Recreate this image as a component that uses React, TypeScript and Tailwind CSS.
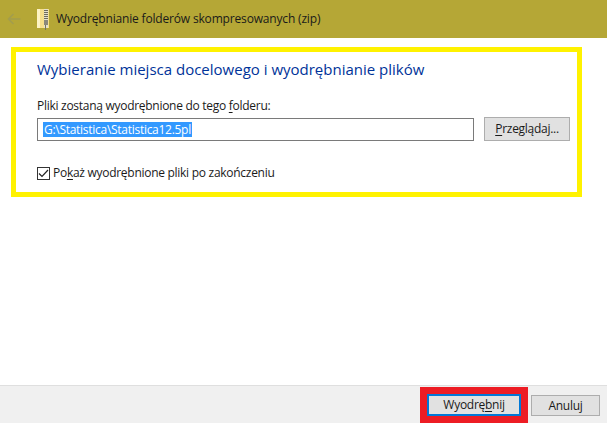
import React from 'react';

const ZipIcon = () => (
  <svg width="13" height="22" viewBox="0 0 13 22" className="shrink-0">
    <rect x="0" y="1" width="12" height="19" fill="#f7e08c" />
    <rect x="0" y="1" width="3" height="19" fill="#fdf3c4" />
    <rect x="7" y="1" width="4" height="19" fill="#e4e0cc" />
    <path d="M7 2.5h4M7 4.5h4M7 6.5h4M7 8.5h4M7 10.5h4" stroke="#6f6c5c" strokeWidth="1" />
    <rect x="7" y="12" width="4" height="5" fill="#8b887a" />
    <path d="M8.5 17v5" stroke="#77745f" strokeWidth="1" />
  </svg>
);

const BackArrow = () => (
  <svg width="14" height="12" viewBox="0 0 14 12" fill="none" stroke="#a39d4e" strokeWidth="1.5">
    <path d="M13.5 6H1.5M6.5 1l-5 5 5 5" />
  </svg>
);

const Mnemonic: React.FC<{ children: React.ReactNode }> = ({ children }) => (
  <span className="underline underline-offset-2">{children}</span>
);

const App: React.FC = () => {
  return (
    <div className="flex h-[423px] w-[607px] flex-col overflow-hidden bg-white font-['Open_Sans','Noto_Sans',sans-serif] text-[12px] leading-[16px] tracking-[-0.28px] text-[#1a1a1a]">
      {/* title bar */}
      <div className="flex h-[38px] shrink-0 items-center bg-[#b5a736] pl-[7px]">
        <BackArrow />
        <div className="ml-[16px] mr-[6px] flex">
          <ZipIcon />
        </div>
        <span className="tracking-[-0.17px]">Wyodrębnianie folderów skompresowanych (zip)</span>
      </div>

      {/* content with the yellow marker frame */}
      <div className="flex-1 px-[11px] pt-[9px]">
        <div className="h-[150px] w-[571px] border-[5px] border-[#fff200] pl-[21px] pr-[7px] pt-[5px]">
          <h1 className="text-[15px] leading-[24px] font-normal tracking-normal text-[#003399]">
            Wybieranie miejsca docelowego i wyodrębnianie plików
          </h1>
          <p className="mt-[17px]">
            Pliki zostaną wyodrębnione do tego <Mnemonic>f</Mnemonic>olderu:
          </p>
          <div className="mt-[3px] flex items-center gap-[10px]">
            <div className="flex h-[23px] w-[437px] items-center border border-[#7a7a7a] pl-[5px]">
              <span className="bg-[#3399ff] px-px leading-[15px] text-white">
                G:\Statistica\Statistica12.5pl
              </span>
            </div>
            <button className="h-[24px] w-[86px] border border-[#adadad] bg-[#e1e1e1]">
              <Mnemonic>P</Mnemonic>rzeglądaj...
            </button>
          </div>
          <label className="mt-[24px] flex items-center gap-[3px]">
            <span className="flex h-[13px] w-[13px] items-center justify-center border border-[#333] bg-white">
              <svg width="11" height="9" viewBox="0 0 11 9" fill="none" stroke="#222" strokeWidth="1.2">
                <path d="M1 4.5L4 7.5L10 1" />
              </svg>
            </span>
            <span>
              Po<Mnemonic>k</Mnemonic>aż wyodrębnione pliki po zakończeniu
            </span>
          </label>
        </div>
      </div>

      {/* footer */}
      <div className="flex h-[38px] shrink-0 items-start justify-end border-t border-[#dfdfdf] bg-[#f0f0f0] pr-[7px] pt-[1px]">
        <div className="h-[36px] w-[108px] border-[7px] border-[#ed1c24]">
          <button className="h-full w-full border-2 border-[#0078d7] bg-[#e1e1e1]">
            Wyodrę<Mnemonic>b</Mnemonic>nij
          </button>
        </div>
        <button className="ml-[3px] mt-[8px] h-[21px] w-[69px] border border-[#adadad] bg-[#e1e1e1]">
          Anuluj
        </button>
      </div>
    </div>
  );
};

export default App;
